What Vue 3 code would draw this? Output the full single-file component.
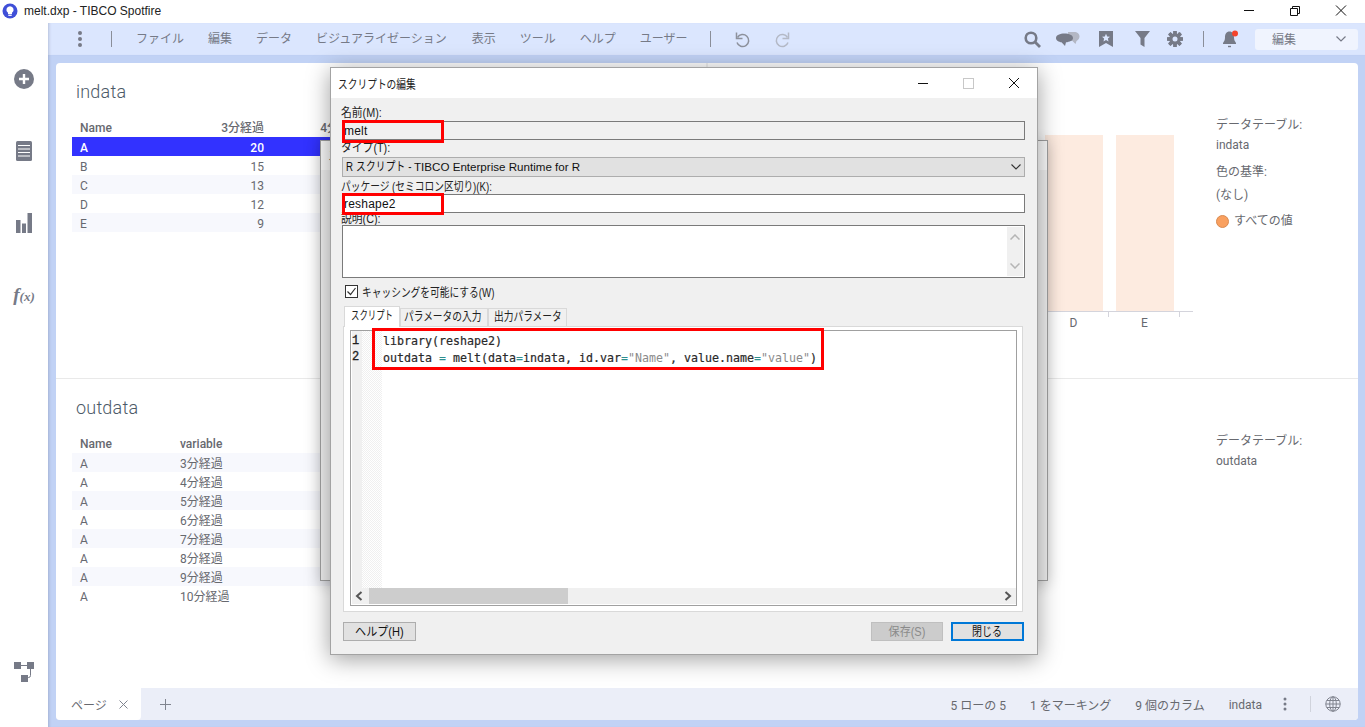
<script setup>
const menus = ['ファイル', '編集', 'データ', 'ビジュアライゼーション', '表示', 'ツール', 'ヘルプ', 'ユーザー']
const inRows = [
  ['A', 20, 18], ['B', 15, 14], ['C', 13, 11], ['D', 12, 10], ['E', 9, 8]
]
const outRows = ['3分経過', '4分経過', '5分経過', '6分経過', '7分経過', '8分経過', '9分経過', '10分経過']
const bars = ['A', 'B', 'C', 'D', 'E']
const gearTeeth = [0, 45, 90, 135, 180, 225, 270, 315]
</script>

<template>
  <div class="app">
    <header class="titlebar">
      <svg class="logo" width="16" height="16" viewBox="0 0 16 16">
        <circle cx="8" cy="8" r="7.5" fill="#3f4fd8" />
        <path d="M8 3.2a3.6 3.6 0 0 0-2 6.6v1.2h4V9.800a3.6 3.6 0 0 0-2-6.6z" fill="#fff" />
        <rect x="6.3" y="11.6" width="3.4" height="1.3" fill="#fff" />
      </svg>
      <span class="wintitle">melt.dxp - TIBCO Spotfire</span>
      <div class="winbtns">
        <svg width="46" height="23" viewBox="0 0 46 23"><path d="M18 10.5h10" stroke="#111" fill="none" /></svg>
        <svg width="46" height="23" viewBox="0 0 46 23"><path d="M18.5 8.5h7v7h-7zM20.500 8.500v-2h7v7h-2" stroke="#111" fill="none" /></svg>
        <svg width="46" height="23" viewBox="0 0 46 23"><path d="M18 5.500l10 10M28 5.500l-10 10" stroke="#111" fill="none" /></svg>
      </div>
    </header>

    <div class="shell">
      <aside class="sidebar">
        <svg width="20" height="20" viewBox="0 0 20 20" class="s-plus">
          <circle cx="10" cy="10" r="10" fill="#767a87" />
          <path d="M10 5v10M5 10h10" stroke="#fff" stroke-width="2.400" />
        </svg>
        <svg width="16" height="20" viewBox="0 0 16 20" class="s-next">
          <rect width="16" height="20" rx="1.500" fill="#767a87" />
          <path d="M2 4.500h12M2 8h12M2 11.500h12M2 15h12" stroke="#fff" stroke-width="1.200" />
        </svg>
        <svg width="16" height="20" viewBox="0 0 16 20" class="s-next">
          <path d="M0 7h4.500v13H0zM6 10.500h4V20H6zM11.500 0H16v20h-4.500z" fill="#767a87" />
        </svg>
        <span class="fx"><i>f</i><small>(x)</small></span>
        <svg width="20" height="20" viewBox="0 0 20 20" class="s-net">
          <path d="M0 0h7v7H0zM13 0h7v7h-7zM7 13h7v7H7z" fill="#767a87" />
          <path d="M7 3.500h6M16.500 7v6.500a2 2 0 0 1-2 2H14" stroke="#767a87" fill="none" />
        </svg>
      </aside>

      <div class="main">
        <nav class="toolbar">
          <svg class="kebab" width="6" height="16" viewBox="0 0 6 16">
            <circle cx="3" cy="2" r="2" fill="#767a87" /><circle cx="3" cy="8" r="2" fill="#767a87" /><circle cx="3" cy="14" r="2" fill="#767a87" />
          </svg>
          <span class="sep sep-a"></span>
          <div class="menus"><span v-for="m in menus" :key="m">{{ m }}</span></div>
          <span class="sep sep-b"></span>
          <svg class="undo" width="16" height="18" viewBox="0 0 16 18">
            <path d="M3.500 7.500A6 6 0 1 1 3 12.500" stroke="#8d919c" stroke-width="1.500" fill="none" />
            <path d="M2.500 2.500v6h6" fill="none" stroke="#8d919c" stroke-width="1.500" />
          </svg>
          <svg class="redo" width="16" height="18" viewBox="0 0 16 18">
            <path d="M12.500 7.500A6 6 0 1 0 13 12.500" stroke="#b4b9c6" stroke-width="1.500" fill="none" />
            <path d="M13.500 2.500v6h-6" fill="none" stroke="#b4b9c6" stroke-width="1.500" />
          </svg>
          <div class="tools">
            <svg class="t-search" width="17" height="17" viewBox="0 0 17 17">
              <circle cx="7" cy="7" r="5.300" fill="none" stroke="#767a87" stroke-width="2.600" />
              <path d="M11 11l5 5" stroke="#767a87" stroke-width="2.800" />
            </svg>
            <svg class="t-chat" width="24" height="16" viewBox="0 0 24 16">
              <path d="M12 1h6c3.500 0 5.500 2 5.500 4.500 0 2-1.500 3.800-3 4.500l-1 3-3-3h-4z" fill="#b3b7c4" />
              <path d="M8.500 2.500C4 2.500 0 4 0 7c0 2.500 3 4 5.500 4.300L9 15l1-3.700c3.500-.3 7-1.800 7-4.300 0-3-4-4.500-8.500-4.500z" fill="#767a87" />
            </svg>
            <svg class="t-book" width="14" height="16" viewBox="0 0 14 16">
              <path d="M0 0h14v16l-7-4-7 4z" fill="#767a87" />
              <path d="M7 2.800l1.200 2.600 2.800.3-2.100 1.900.6 2.800L7 9l-2.500 1.400.6-2.800L3 5.700l2.800-.3z" fill="#dbe6fe" />
            </svg>
            <svg class="t-filter" width="15" height="16" viewBox="0 0 15 16">
              <path d="M0 0h15L9.500 7v9L5.500 13.500V7z" fill="#767a87" />
            </svg>
            <svg class="t-gear" width="16" height="16" viewBox="0 0 16 16">
              <rect v-for="a in gearTeeth" :key="a" x="6.300" y="0" width="3.400" height="16" rx="0.600" fill="#767a87" :transform="'rotate(' + a + ' 8 8)'" />
              <circle cx="8" cy="8" r="5.800" fill="#767a87" />
              <circle cx="8" cy="8" r="2.500" fill="#dbe6fe" />
            </svg>
            <span class="sep sep-c"></span>
            <svg class="t-bell" width="17" height="19" viewBox="0 0 17 19">
              <path d="M6.500 1.500C3.500 2.500 3 5 3 7.500c0 2.500-1 4-2 5.500v1h13v-1c-1-1.500-2-3-2-5.500 0-2.500-.5-5-3.500-6z" fill="#767a87" />
              <path d="M6 15.800h3v1.400H6z" fill="#767a87" />
              <circle cx="13" cy="3.500" r="3" fill="#f4432c" />
            </svg>
            <div class="modebox">
              <span>編集</span>
              <svg width="10" height="6" viewBox="0 0 10 6"><path d="M.5.500L5 5 9.500.5" fill="none" stroke="#767a87" stroke-width="1.200" /></svg>
            </div>
          </div>
        </nav>

        <div class="canvas">
          <div class="card">
            <section class="panel panel-top">
              <div class="vis-left">
                <h2>indata</h2>
                <div class="tbl">
                  <div class="row row3 head"><span>Name</span><span class="num">3分経過</span><span class="num">4分経過</span></div>
                  <div v-for="r in inRows" :key="r[0]" class="row row3" :class="{ sel: r[0] === 'A' }">
                    <span>{{ r[0] }}</span><span class="num">{{ r[1] }}</span><span class="num">{{ r[2] }}</span>
                  </div>
                </div>
              </div>
              <div class="vis-right">
                <div class="chart">
                  <div class="bars">
                    <div v-for="b in bars" :key="b" class="barcol">
                      <div class="bar"></div>
                      <span class="barlabel">{{ b }}</span>
                    </div>
                    <div class="axis-tail"></div>
                  </div>
                </div>
                <div class="legend">
                  <p class="lg-t">データテーブル:</p>
                  <p class="lg-v">indata</p>
                  <p class="lg-t lg-gap">色の基準:</p>
                  <p class="lg-v lg-v2">(なし)</p>
                  <p class="lg-item"><i class="dot"></i>すべての値</p>
                </div>
              </div>
            </section>

            <section class="panel panel-bottom">
              <div class="vis-left">
                <h2 class="h-out">outdata</h2>
                <div class="tbl">
                  <div class="row row2 head"><span>Name</span><span>variable</span></div>
                  <div v-for="v in outRows" :key="v" class="row row2"><span>A</span><span>{{ v }}</span></div>
                </div>
              </div>
              <div class="vis-right">
                <div class="chart"></div>
                <div class="legend">
                  <p class="lg-t">データテーブル:</p>
                  <p class="lg-v">outdata</p>
                </div>
              </div>
            </section>

            <footer class="statusbar">
              <div class="pagetab"><span>ページ</span>
                <svg width="9" height="9" viewBox="0 0 9 9"><path d="M.5.500l8 8M8.500.5l-8 8" stroke="#80848f" fill="none" /></svg>
              </div>
              <svg class="addpage" width="13" height="13" viewBox="0 0 13 13"><path d="M6.500 1v11M1 6.500h11" stroke="#80848f" fill="none" /></svg>
              <div class="stats">
                <span>5 ローの 5</span><span>1 をマーキング</span><span>9 個のカラム</span><span class="st-name">indata</span>
                <svg class="st-kebab" width="4" height="14" viewBox="0 0 4 14">
                  <circle cx="2" cy="2" r="1.500" fill="#767a87" /><circle cx="2" cy="7" r="1.500" fill="#767a87" /><circle cx="2" cy="12" r="1.500" fill="#767a87" />
                </svg>
                <span class="sep sep-d"></span>
                <svg class="globe" width="16" height="16" viewBox="0 0 16 16" fill="none" stroke="#80848f">
                  <circle cx="8" cy="8" r="7.200" /><ellipse cx="8" cy="8" rx="3.300" ry="7.200" />
                  <path d="M8 .8v14.400M.8 8h14.400M1.800 4.500h12.400M1.800 11.500h12.400" />
                </svg>
              </div>
            </footer>
          </div>
        </div>
      </div>
    </div>

    <div class="dlg-back">
      <div class="back-title">スクリプト</div>
    </div>

    <div class="dialog">
      <div class="dlg-title">
        <span class="nar">スクリプトの編集</span>
        <div class="dlg-btns">
          <svg width="12" height="12" viewBox="0 0 12 12"><path d="M1 6.500h10" stroke="#111" fill="none" /></svg>
          <svg width="11" height="11" viewBox="0 0 11 11"><rect x=".5" y=".5" width="10" height="10" fill="none" stroke="#c8c8c8" /></svg>
          <svg width="12" height="12" viewBox="0 0 12 12"><path d="M1 1l10 10M11 1L1 11" stroke="#111" fill="none" /></svg>
        </div>
      </div>
      <div class="dlg-body">
        <label class="lbl lbl-name"><span class="nar wide">名前(M):</span></label>
        <div class="inp inp-ro">melt</div>
        <label class="lbl lbl-type"><span class="nar wide">タイプ(T):</span></label>
        <div class="inp sel-box">
          <span class="sel-text"><span class="nar sel-jp">R スクリプト -</span><span class="sel-en">TIBCO Enterprise Runtime for R</span></span>
          <svg width="10" height="6" viewBox="0 0 10 6"><path d="M.5.500L5 5 9.500.5" fill="none" stroke="#333" stroke-width="1.100" /></svg>
        </div>
        <label class="lbl lbl-pkg"><span class="nar">パッケージ (セミコロン区切り)(K):</span></label>
        <div class="inp inp-w">reshape2</div>
        <label class="lbl lbl-desc"><span class="nar wide">説明(C):</span></label>
        <div class="txtarea">
          <div class="vscroll">
            <svg width="10" height="6" viewBox="0 0 10 6"><path d="M.5 5.500L5 1l4.500 4.500" fill="none" stroke="#b5b5b5" stroke-width="1.500" /></svg>
            <svg width="10" height="6" viewBox="0 0 10 6"><path d="M.5.500L5 5 9.500.5" fill="none" stroke="#b5b5b5" stroke-width="1.500" /></svg>
          </div>
        </div>
        <div class="chk-row">
          <svg width="13" height="13" viewBox="0 0 13 13">
            <rect x=".5" y=".5" width="12" height="12" fill="#fff" stroke="#333" />
            <path d="M2.500 6.500l3 3 5-6.500" fill="none" stroke="#333" stroke-width="1.200" />
          </svg>
          <span class="nar">キャッシングを可能にする(W)</span>
        </div>
        <div class="tabs">
          <span class="tab active"><span class="nar n70">スクリプト</span></span>
          <span class="tab t2"><span class="nar">パラメータの入力</span></span>
          <span class="tab t3"><span class="nar">出力パラメータ</span></span>
        </div>
        <div class="tabpanel">
          <div class="editor">
            <div class="code-area">
              <div class="gutter"><div>1</div><div>2</div></div>
              <div class="fold"></div>
              <pre class="code"><code>library(reshape2)
outdata <b>=</b> melt(data<b>=</b>indata, id.var<b>=</b><em>"Name"</em>, value.name<b>=</b><em>"value"</em>)</code></pre>
            </div>
            <div class="hscroll">
              <svg class="h-l" width="8" height="10" viewBox="0 0 8 10"><path d="M6.500 1L2 5l4.500 4" fill="none" stroke="#555" stroke-width="2" /></svg>
              <div class="thumb"></div>
              <svg class="h-r" width="8" height="10" viewBox="0 0 8 10"><path d="M1.500 1L6 5 1.500 9" fill="none" stroke="#555" stroke-width="2" /></svg>
            </div>
          </div>
        </div>
        <div class="dlg-foot">
          <button class="btn"><span class="nar-c n90">ヘルプ(H)</span></button>
          <button class="btn btn-dis"><span class="nar-c n90">保存(S)</span></button>
          <button class="btn btn-def"><span class="nar-c">閉じる</span></button>
        </div>
      </div>
      <div class="mark mark-name"></div>
      <div class="mark mark-pkg"></div>
      <div class="mark mark-code"></div>
    </div>
  </div>
</template>

<style>
html, body { margin: 0; padding: 0; background: #fff; }
</style>

<style scoped>
.app { position: relative; width: 1365px; height: 727px; overflow: hidden; display: flex; flex-direction: column; background: #fff; font-family: "Roboto", "Noto Sans CJK JP", sans-serif; font-size: 12px; color: #67696f; }
.titlebar { height: 23px; flex: none; display: flex; align-items: center; padding-left: 2px; box-sizing: border-box; }
.logo { margin-top: -2px; }
.wintitle { margin-left: 6px; margin-top: -2px; font-family: "Liberation Sans", "Noto Sans CJK JP", sans-serif; font-size: 12px; color: #222; }
.winbtns { margin-left: auto; display: flex; margin-right: 1px; }
.winbtns svg { display: block; }

.shell { flex: 1; display: flex; min-height: 0; }
.sidebar { width: 48px; flex: none; display: flex; flex-direction: column; align-items: center; padding: 46px 0 45px; box-sizing: border-box; }
.s-next { margin-top: 52px; }
.fx { margin-top: 52px; height: 20px; line-height: 20px; font-family: "Liberation Serif", serif; color: #767a87; font-size: 19px; font-weight: bold; white-space: nowrap; }
.fx small { font-size: 13px; font-style: italic; }
.s-net { margin-top: auto; }

.main { flex: 1; display: flex; flex-direction: column; min-width: 0; }
.toolbar { height: 32px; flex: none; background: #dbe6fe; display: flex; align-items: center; position: relative; color: #767a87; box-shadow: inset 3px 0 3px -2px rgba(70, 80, 110, .25); }
.kebab { margin-left: 29px; }
.sep { display: block; width: 1px; height: 16px; background: #8a8e99; flex: none; }
.sep-a { margin-left: 28px; }
.menus { display: flex; gap: 24px; margin-left: 24px; margin-top: -3px; white-space: nowrap; }
.menus span:nth-child(n+5) { position: relative; left: 1px; }
.sep-b { margin-left: 23px; }
.undo { margin-left: 23px; }
.redo { margin-left: 25px; }
.tools { margin-left: auto; display: flex; align-items: center; padding-right: 7px; }
.t-chat { margin-left: 15px; margin-top: 0; }
.t-book { margin-left: 19px; }
.t-filter { margin-left: 22px; }
.t-gear { margin-left: 17px; }
.sep-c { margin-left: 20px; }
.t-bell { margin-left: 18px; }
.modebox { width: 103px; height: 21px; margin-left: 16px; background: #f0f4fe; border-radius: 3px; display: flex; align-items: center; justify-content: space-between; padding: 0 12px 0 17px; box-sizing: border-box; }
.modebox span { margin-top: -2px; }

.canvas { flex: 1; background: #c1d2f5; padding: 8px 7px 7px 8px; box-sizing: border-box; display: flex; min-height: 0; box-shadow: inset 3px 0 3px -2px rgba(70, 80, 110, .25); }
.card { flex: 1; background: #fff; border-radius: 4px; display: flex; flex-direction: column; overflow: hidden; }
.panel { display: flex; box-sizing: border-box; }
.panel-top { height: 316px; border-bottom: 1px solid #e9e9e9; }
.panel-bottom { flex: 1; min-height: 0; }
.vis-left { width: 652px; flex: none; padding: 18px 0 0 16px; box-sizing: border-box; }
.panel-top .vis-left { border-right: 2px solid #f0f0f0; }
.vis-right { flex: 1; display: flex; min-width: 0; }
h2 { margin: 0 0 15px 4px; font-size: 18px; line-height: 22px; font-weight: 300; color: #4d5a68; font-family: "Roboto", sans-serif; letter-spacing: .2px; }
.row { display: grid; height: 19px; line-height: 22px; width: 400px; }
.row span:first-child { padding-left: 8px; }
.row3 { grid-template-columns: 100px 92px 99px; }
.row2 { grid-template-columns: 108px 140px; }
.row:nth-child(even) { background: #f7f8fd; }
.row.sel { background: #3232ff; color: #fff; font-weight: 500; }
.row.head { font-weight: 500; line-height: 21px; }
.num { text-align: right; white-space: nowrap; }
.chart { flex: 1; min-width: 0; display: flex; justify-content: flex-end; }
.bars { display: flex; align-items: flex-start; padding-top: 72px; padding-right: 23px; height: 212px; box-sizing: content-box; }
.barcol { width: 71px; display: flex; flex-direction: column; align-items: center; }
.bar { width: 58px; height: 176px; background: #fdebe0; }
.barlabel { width: 71px; height: 24px; box-sizing: border-box; border-top: 1px solid #d4d4dc; text-align: center; line-height: 22px; color: #67696f; position: relative; }
.barlabel::after { content: ""; position: absolute; right: 0; top: 0; width: 1px; height: 5px; background: #d4d4dc; }
.axis-tail { width: 13px; margin-top: 176px; border-top: 1px solid #d4d4dc; }
.legend { width: 142px; flex: none; padding-top: 52px; box-sizing: border-box; }
.legend p { margin: 0; line-height: 20px; }
.lg-gap { margin-top: 7px !important; }
.lg-v2 { margin-top: 3px !important; }
.lg-item { display: flex; align-items: center; gap: 5px; margin-top: 6px !important; }
.dot { width: 11px; height: 11px; border-radius: 50%; background: #f9a05f; border: 1px solid #d98a50; display: block; }

.statusbar { height: 32px; flex: none; background: #ebeef8; display: flex; align-items: center; margin-top: auto; }
.pagetab { width: 85px; height: 32px; flex: none; background: #fff; border-radius: 0 0 4px 4px; display: flex; align-items: center; padding-left: 15px; gap: 12px; box-sizing: border-box; }
.addpage { margin-left: 18px; }
.stats { margin-left: auto; display: flex; align-items: center; gap: 24px; padding-right: 17px; white-space: nowrap; }
.st-name { padding-top: 1px; }
.st-kebab { margin-left: -3px; }
.sep-d { height: 16px; background: #d0d3dc; margin-left: -1px; }
.globe { margin-left: -10px; }

.dlg-back { position: absolute; left: 320px; top: 140px; width: 728px; height: 441px; box-sizing: border-box; border: 1px solid #a0a0a0; background: #f0f0f0; box-shadow: 0 3px 14px rgba(0, 0, 0, .2); }
.back-title { height: 29px; background: #fbfbfb; padding: 5px 0 0 7px; box-sizing: border-box; color: #555; font-size: 12px; white-space: nowrap; }

.dialog { position: absolute; left: 330px; top: 67px; width: 708px; height: 588px; box-sizing: border-box; border: 1px solid #a3a3a3; background: #f0f0f0; box-shadow: 0 4px 22px rgba(0, 0, 0, .38); color: #111; font-family: "Liberation Sans", "Noto Sans CJK JP", sans-serif; font-size: 12px; display: flex; flex-direction: column; }
.nar { display: inline-block; white-space: nowrap; transform: scaleX(.81); transform-origin: left center; }
.nar.wide { transform: scaleX(.9); }
.nar.n70 { transform: scaleX(.7); }
.nar-c { display: inline-block; white-space: nowrap; transform: scaleX(.83); }
.nar-c.n90 { transform: scaleX(.92); }
.dlg-title { height: 30px; flex: none; background: #fff; display: flex; align-items: center; padding-left: 7px; color: #222; }
.dlg-btns { margin-left: auto; display: flex; align-items: center; gap: 34px; padding-right: 17px; }
.dlg-btns svg { display: block; }
.dlg-body { flex: 1; padding: 6px 12px 0 11px; display: flex; flex-direction: column; min-height: 0; }
.lbl { display: block; height: 17px; line-height: 17px; margin-left: -1px; white-space: nowrap; color: #222; }
.lbl-name { line-height: 18px; }
.lbl-type { line-height: 17px; }
.lbl-pkg { line-height: 21px; }
.lbl-desc { height: 12px; line-height: 12px; }
.inp { height: 19px; box-sizing: border-box; border: 1px solid #7a7a7a; line-height: 18px; padding-left: 1px; flex: none; color: #111; letter-spacing: .2px; }
.inp-ro { background: #f0f0f0; }
.inp-w { background: #fff; }
.sel-box { height: 20px; background: #e1e1e1; border-color: #adadad; display: flex; align-items: center; justify-content: space-between; padding: 0 3px; }
.sel-text { display: flex; }
.sel-jp { width: 68px; }
.sel-en { font-size: 11.6px; letter-spacing: 0; }
.txtarea { height: 53px; flex: none; box-sizing: border-box; border: 1px solid #7a7a7a; background: #fff; display: flex; justify-content: flex-end; padding: 1px; position: relative; z-index: 1; }
.vscroll { width: 16px; background: #f0f0f0; display: flex; flex-direction: column; align-items: center; justify-content: space-between; padding: 7px 0; box-sizing: border-box; }
.chk-row { display: flex; align-items: center; gap: 4px; margin: 6px 0 0 3px; height: 14px; color: #222; }
.tabs { display: flex; height: 20px; margin: 8px 0 0 2px; flex: none; align-items: flex-end; position: relative; z-index: 1; }
.tab { height: 18px; line-height: 17px; box-sizing: border-box; border: 1px solid #d9d9d9; border-bottom: 0; background: #f0f0f0; white-space: nowrap; color: #222; overflow: hidden; }
.tab.active { width: 56px; height: 21px; background: #fff; line-height: 18px; margin-bottom: -1px; padding-left: 6px; }
.t2 { width: 88px; padding-left: 3px; }
.t3 { width: 79px; margin-left: 0; padding-left: 5px; }
.tabpanel { height: 286px; width: 680px; margin-left: 1px; flex: none; box-sizing: border-box; background: #fff; border: 1px solid #d9d9d9; padding: 3px 5px 5px 6px; }
.editor { height: 100%; box-sizing: border-box; border: 1px solid #a0a0a0; display: flex; flex-direction: column; padding-left: 1px; }
.code-area { flex: 1; display: flex; min-height: 0; background: #fff; }
.gutter { width: 10px; flex: none; background: #f0f0f0; font-family: "Liberation Mono", monospace; font-size: 12px; line-height: 16px; padding-top: 2px; color: #222; -webkit-text-stroke: .3px #222; }
.fold { width: 20px; flex: none; background-color: #fff; background-image: repeating-conic-gradient(#f0f0f0 0 25%, #fff 0 50%); background-size: 2px 2px; }
.code { margin: 0; padding: 2px 0 0 1px; font-family: "Liberation Mono", monospace; font-size: 11.64px; line-height: 16px; color: #2a2a2a; -webkit-text-stroke: .2px #2a2a2a; white-space: pre; }
.code b { font-weight: normal; color: #2f8f8f; -webkit-text-stroke: 0; }
.code em { font-style: normal; color: #8a8a8a; -webkit-text-stroke: 0; }
.hscroll { height: 16px; flex: none; margin-bottom: 1px; background: #f0f0f0; display: flex; align-items: center; }
.h-l { margin-left: 3px; }
.thumb { width: 199px; height: 16px; background: #cdcdcd; margin-left: 6px; }
.h-r { margin-left: auto; margin-right: 4px; }
.dlg-foot { display: flex; margin-top: 10px; margin-left: 1px; }
.btn { height: 19px; width: 73px; box-sizing: border-box; border: 1px solid #adadad; background: #e1e1e1; font: inherit; color: #111; padding: 0; line-height: 16px; }
.btn-dis { margin-left: auto; width: 72px; background: #ccc; border-color: #bfbfbf; color: #8a8a8a; }
.btn-def { margin-left: 8px; margin-right: 1px; border: 2px solid #0078d7; line-height: 14px; }
.mark { position: absolute; border: 3px solid #f00; box-sizing: border-box; z-index: 2; pointer-events: none; }
.mark-name { left: 11px; top: 52px; width: 102px; height: 23px; }
.mark-pkg { left: 11px; top: 125px; width: 102px; height: 22px; }
.mark-code { left: 41px; top: 260px; width: 452px; height: 42px; }
</style>
